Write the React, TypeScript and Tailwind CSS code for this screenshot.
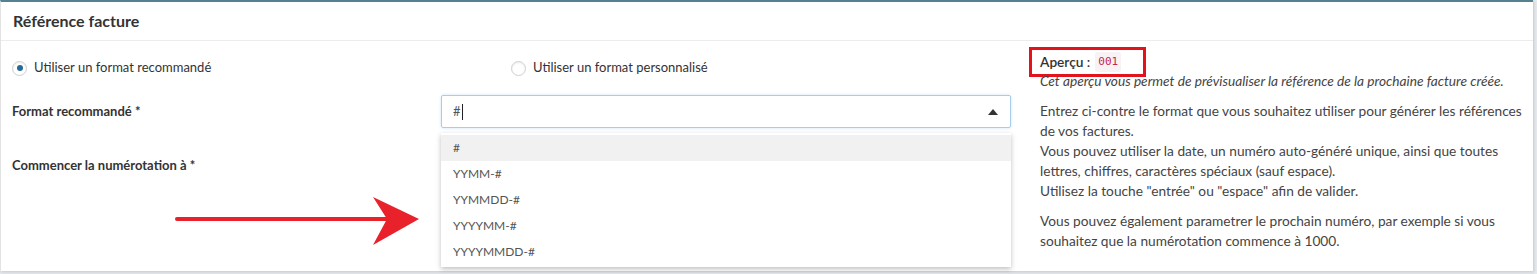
import { useState } from "react";

const options = ["#", "YYMM-#", "YYMMDD-#", "YYYYMM-#", "YYYYMMDD-#"];

const Radio = ({ checked, label }: { checked: boolean; label: string }) => (
  <label className="flex items-center gap-[7px] text-[13px] text-[#333]">
    <span className="flex h-[15px] w-[15px] items-center justify-center rounded-full border border-[#cfcfcf] bg-white shadow-[inset_0_1px_2px_rgba(0,0,0,0.08)]">
      {checked && <span className="h-[6px] w-[6px] rounded-full bg-[#236b95]" />}
    </span>
    {label}
  </label>
);

const App = () => {
  const [active] = useState(0);

  return (
    <div className="h-[274px] w-[1537px] bg-[#e6e9ed] font-['Lato',sans-serif]">
      <div className="relative h-[271px] w-[1533px] border-t-2 border-l border-[#e3e3e3] border-t-[#56828f] bg-white shadow-[1px_1px_3px_rgba(0,0,0,0.15)]">
        <div className="flex h-[39px] items-center border-b border-[#ececec] px-[12px]">
          <h2 className="text-[16px] font-bold text-[#333]">Référence facture</h2>
        </div>

        <div className="flex pl-[11px]">
          <div className="w-[999px]">
            <div className="flex h-[54px] items-center">
              <div className="w-[499px]">
                <Radio checked label="Utiliser un format recommandé" />
              </div>
              <div className="flex-1">
                <Radio checked={false} label="Utiliser un format personnalisé" />
              </div>
            </div>

            <div className="flex">
              <div className="w-[429px] text-[13px] font-bold text-[#333]">
                <div className="flex h-[33px] items-center">Format recommandé *</div>
                <div className="mt-[21px] flex h-[33px] items-center">Commencer la numérotation à *</div>
              </div>
              <div className="relative flex-1">
                <div className="flex h-[33px] items-center justify-between rounded-[2px] border border-[#a8cdea] px-[11px] text-[13px] text-[#555] shadow-[0_0_3px_rgba(102,175,233,0.35)]">
                  <span className="flex items-center">
                    #<span className="ml-[1px] h-[16px] w-px bg-[#222]" />
                  </span>
                  <svg width="10" height="6" viewBox="0 0 10 6" className="mr-[1px]">
                    <path d="M0 6 L5 0 L10 6 Z" fill="#333" />
                  </svg>
                </div>
                <ul className="absolute left-0 right-0 top-[38px] z-10 bg-white py-[2px] text-[12px] text-[#555] shadow-[0_2px_5px_rgba(0,0,0,0.25)]">
                  {options.map((o, i) => (
                    <li
                      key={o}
                      className={`flex h-[26px] items-center px-[12px] ${i === active ? "bg-[#f1f1f1]" : ""}`}
                    >
                      {o}
                    </li>
                  ))}
                </ul>
              </div>
            </div>
          </div>

          <div className="ml-[29px] w-[485px] pt-[6px] text-[13.7px] leading-[20px] text-[#444]">
            <div className="-ml-[11px] inline-flex h-[30px] items-center border-[3px] border-[#e3131c] pl-[8px] pr-[22px] text-[#333]">
              <span className="font-semibold">Aperçu :</span>
              <code className="ml-[5px] rounded-[2px] bg-[#f9f2f4] px-[3px] font-['DejaVu_Sans_Mono',monospace] text-[11px] text-[#c7254e]">
                001
              </code>
            </div>
            <p className="-mt-[6px] italic">
              Cet aperçu vous permet de prévisualiser la référence de la prochaine facture créée.
            </p>
            <p className="mt-[10px]">
              Entrez ci-contre le format que vous souhaitez utiliser pour générer les références de vos factures.
              <br />
              Vous pouvez utiliser la date, un numéro auto-généré unique, ainsi que toutes lettres, chiffres, caractères spéciaux (sauf espace).
              <br />
              Utilisez la touche "entrée" ou "espace" afin de valider.
            </p>
            <p className="mt-[10px]">
              Vous pouvez également parametrer le prochain numéro, par exemple si vous souhaitez que la numérotation commence à 1000.
            </p>
          </div>
        </div>

        <svg
          className="pointer-events-none absolute left-[172px] top-[193px]"
          width="250"
          height="52"
          viewBox="0 0 250 52"
        >
          <line x1="4" y1="24" x2="222" y2="24" stroke="#e8212a" strokeWidth="4" strokeLinecap="round" />
          <path d="M200 2 L246 24 L200 50 L214 24 Z" fill="#e8212a" />
        </svg>
      </div>
    </div>
  );
};

export default App;
